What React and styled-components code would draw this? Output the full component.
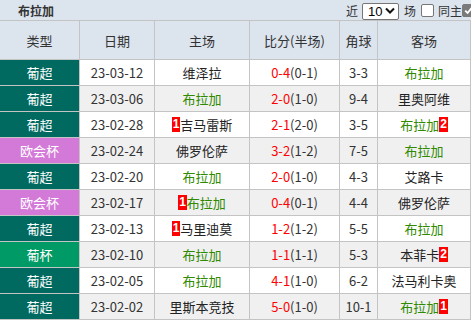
import React from "react";
import styled, { createGlobalStyle } from "styled-components";

const Global = createGlobalStyle`
  html, body { margin: 0; padding: 0; background: #fff; }
  body { font-family: "Noto Sans CJK SC", "Noto Sans", sans-serif; font-size: 13px; color: #333; overflow: hidden; }
`;

const Page = styled.div`
  width: 471px;
  height: 320px;
  overflow: hidden;
`;

const TopBar = styled.div`
  height: 20px;
  background: #dce4ee;
  display: flex;
  align-items: center;
  overflow: hidden;
`;

const Title = styled.div`
  padding-left: 18px;
  font-weight: bold;
  font-size: 12px;
  color: #333;
`;

const Controls = styled.div`
  margin-left: auto;
  margin-right: -4px;
  display: flex;
  align-items: center;
  font-size: 12px;
  color: #333;
`;

const Label = styled.span`
  margin: ${(p) => p.$m || "0"};
`;

const SelectWrap = styled.div`
  position: relative;
  margin-left: 4px;
  width: 37px;
  height: 17px;
`;

const Select = styled.select`
  appearance: none;
  box-sizing: border-box;
  width: 100%;
  height: 100%;
  font-family: "Liberation Sans", sans-serif;
  font-size: 13px;
  line-height: 15px;
  padding: 0 0 0 5px;
  margin: 0;
  border: 1px solid #767676;
  border-radius: 2px;
  background: #fff;
  color: #000;
`;

const Chevron = styled.svg`
  position: absolute;
  right: 4px;
  top: 5px;
  width: 10px;
  height: 7px;
  pointer-events: none;
`;

const Box = styled.span`
  box-sizing: border-box;
  display: inline-flex;
  align-items: center;
  justify-content: center;
  width: 13px;
  height: 13px;
  margin: ${(p) => p.$m || "0"};
  border: 1px solid ${(p) => (p.$checked ? "#7a7a7a" : "#767676")};
  border-radius: 2px;
  background: ${(p) => (p.$checked ? "#7a7a7a" : "#fff")};
  flex: none;
`;

const Grid = styled.div`
  display: grid;
  grid-template-columns: 80px 75px 95px 90px 38px 93px;
  border-top: 1px solid #c4c4c4;
`;

const Cell = styled.div`
  display: flex;
  align-items: center;
  justify-content: center;
  box-sizing: border-box;
  height: ${(p) => (p.$head ? "39px" : "26px")};
  border-right: 1px solid #c4c4c4;
  border-bottom: 1px solid #c4c4c4;
  background: ${(p) => p.$bg};
  color: ${(p) => p.$color || "#333"};
  white-space: nowrap;
  font-size: 13px;
`;

const Team = styled.span`
  color: ${(p) => (p.$home ? "#2f8a00" : "#222")};
`;

const Badge = styled.span`
  background: #f00;
  color: #fff;
  font-weight: bold;
  font-family: "Liberation Sans", sans-serif;
  font-size: 12px;
  line-height: 15px;
  padding: 0 1px;
`;

const Red = styled.span`
  color: #f00;
`;

const typeColors = {
  葡超: "#006960",
  欧会杯: "#d379d8",
  葡杯: "#009a66",
};

const rows = [
  ["葡超", "23-03-12", ["维泽拉"], ["0-4", "(0-1)"], "3-3", ["布拉加"]],
  ["葡超", "23-03-06", ["布拉加"], ["2-0", "(1-0)"], "9-4", ["里奥阿维"]],
  ["葡超", "23-02-28", ["吉马雷斯", "1", "L"], ["2-1", "(2-0)"], "3-5", ["布拉加", "2", "R"]],
  ["欧会杯", "23-02-24", ["佛罗伦萨"], ["3-2", "(1-2)"], "7-5", ["布拉加"]],
  ["葡超", "23-02-20", ["布拉加"], ["2-0", "(1-0)"], "4-3", ["艾路卡"]],
  ["欧会杯", "23-02-17", ["布拉加", "1", "L"], ["0-4", "(0-1)"], "4-4", ["佛罗伦萨"]],
  ["葡超", "23-02-13", ["马里迪莫", "1", "L"], ["1-2", "(1-2)"], "5-5", ["布拉加"]],
  ["葡杯", "23-02-10", ["布拉加"], ["1-1", "(1-1)"], "5-3", ["本菲卡", "2", "R"]],
  ["葡超", "23-02-05", ["布拉加"], ["4-1", "(1-0)"], "6-2", ["法马利卡奥"]],
  ["葡超", "23-02-02", ["里斯本竞技"], ["5-0", "(1-0)"], "10-1", ["布拉加", "1", "R"]],
];

function TeamCell({ t, bg }) {
  const [name, badge, side] = t;
  const home = name === "布拉加";
  return (
    <Cell $bg={bg}>
      {badge && side === "L" && <Badge>{badge}</Badge>}
      <Team $home={home}>{name}</Team>
      {badge && side === "R" && <Badge>{badge}</Badge>}
    </Cell>
  );
}

export default function App() {
  const heads = ["类型", "日期", "主场", "比分(半场)", "角球", "客场"];
  return (
    <Page>
      <Global />
      <TopBar>
        <Title>布拉加</Title>
        <Controls>
          <Label>近</Label>
          <SelectWrap>
            <Select defaultValue="10">
              <option value="10">10</option>
              <option value="20">20</option>
            </Select>
            <Chevron viewBox="0 0 10 7">
              <path d="M1 1.5 L5 5.5 L9 1.5" fill="none" stroke="#111" strokeWidth="2" />
            </Chevron>
          </SelectWrap>
          <Label $m="0 0 0 5px">场</Label>
          <Box $m="0 4px 0 5px" />
          <Label>同主</Label>
          <Box $checked>
            <svg width="9" height="9" viewBox="0 0 9 9">
              <path d="M1.2 4.6 L3.6 7 L7.8 1.8" fill="none" stroke="#fff" strokeWidth="1.8" />
            </svg>
          </Box>
        </Controls>
      </TopBar>
      <Grid>
        {heads.map((h) => (
          <Cell key={h} $head $bg="#dce4ee">
            {h}
          </Cell>
        ))}
        {rows.map((r, i) => {
          const bg = i % 2 === 0 ? "#ffffff" : "#f0f0f0";
          return (
            <React.Fragment key={i}>
              <Cell $bg={typeColors[r[0]]} $color="#fff">
                {r[0]}
              </Cell>
              <Cell $bg={bg}>{r[1]}</Cell>
              <TeamCell t={r[2]} bg={bg} />
              <Cell $bg={bg}>
                <Red>{r[3][0]}</Red>
                {r[3][1]}
              </Cell>
              <Cell $bg={bg}>{r[4]}</Cell>
              <TeamCell t={r[5]} bg={bg} />
            </React.Fragment>
          );
        })}
      </Grid>
    </Page>
  );
}
